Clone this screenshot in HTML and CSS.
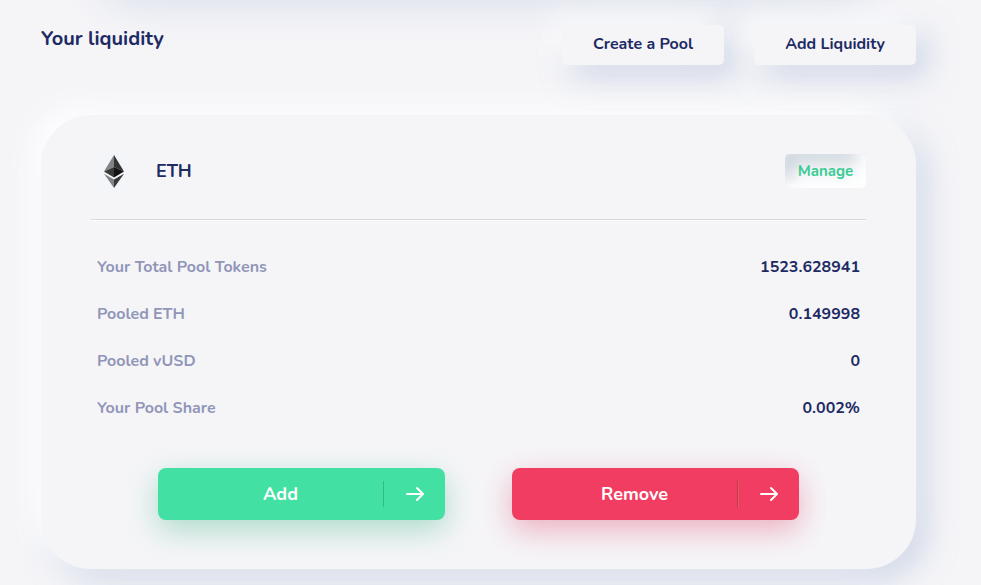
FILE: index.html
```html
<!DOCTYPE html>
<html lang="en">
<head>
<meta charset="utf-8">
<meta name="viewport" content="width=device-width, initial-scale=1">
<title>Your liquidity</title>
<link rel="stylesheet" href="styles.css">
</head>
<body>
<div class="previous-panel"></div>
<main class="page">
  <header class="toolbar">
    <h1 class="title">Your liquidity</h1>
    <div class="toolbar-actions">
      <button class="soft-button" type="button">Create a Pool</button>
      <button class="soft-button" type="button">Add Liquidity</button>
    </div>
  </header>
  <section class="card">
    <div class="card-head">
      <span class="token-icon">
        <svg width="20" height="33" viewBox="0 0 20 33" aria-hidden="true">
          <path d="M10 0 0 16.500 10 12z" fill="#828384"/>
          <path d="M10 0v12l10 4.500z" fill="#343434"/>
          <path d="M0 16.500 10 12v10.500z" fill="#393939"/>
          <path d="M20 16.500 10 12v10.500z" fill="#141414"/>
          <path d="M0 18.700 10 33v-8.500z" fill="#828384"/>
          <path d="M20 18.700 10 33v-8.500z" fill="#393939"/>
        </svg>
      </span>
      <h2 class="token-name">ETH</h2>
      <button class="manage" type="button">Manage</button>
    </div>
    <dl class="stats">
      <div class="stat"><dt>Your Total Pool Tokens</dt><dd>1523.628941</dd></div>
      <div class="stat"><dt>Pooled ETH</dt><dd>0.149998</dd></div>
      <div class="stat"><dt>Pooled vUSD</dt><dd>0</dd></div>
      <div class="stat"><dt>Your Pool Share</dt><dd>0.002%</dd></div>
    </dl>
    <div class="actions">
      <button class="action action-add" type="button">
        <span class="action-label">Add</span>
        <span class="action-arrow"><svg width="20" height="16" viewBox="0 0 20 16" aria-hidden="true"><path d="M2 8h16M12 2l6 6-6 6"/></svg></span>
      </button>
      <button class="action action-remove" type="button">
        <span class="action-label">Remove</span>
        <span class="action-arrow"><svg width="20" height="16" viewBox="0 0 20 16" aria-hidden="true"><path d="M2 8h16M12 2l6 6-6 6"/></svg></span>
      </button>
    </div>
  </section>
</main>
</body>
</html>
```
FILE: styles.css
```css
* {
  box-sizing: border-box;
}

body {
  margin: 0;
  overflow: hidden;
  background: #f5f5f8;
  color: #1d2a63;
  font-family: Nunito, "Open Sans", "Noto Sans", sans-serif;
  font-size: 16px;
  font-weight: 700;
}

button {
  border: 0;
  font: inherit;
  color: inherit;
  cursor: pointer;
}

.previous-panel {
  height: 100px;
  margin: -107px 105px 0 81px;
  border-radius: 50px;
  box-shadow: 10px 10px 40px rgba(174, 188, 216, 0.4);
}

.page {
  padding: 32px 65px 16px 41px;
}

.toolbar {
  display: flex;
  justify-content: space-between;
  align-items: flex-start;
}

.title {
  margin: 0;
  font-size: 20px;
  line-height: 28px;
}

.toolbar-actions {
  display: flex;
  gap: 30px;
}

.soft-button {
  width: 162px;
  height: 40px;
  padding: 0 0 3px;
  border-radius: 5px;
  background: #f5f5f8;
  box-shadow: -10px -10px 30px rgba(255, 255, 255, 0.8), 10px 10px 30px rgba(160, 178, 210, 0.5);
}

.card {
  margin-top: 50px;
  padding: 34px 50px 49px;
  border-radius: 50px;
  background: #f5f5f8;
  box-shadow: -10px -10px 30px #fff, 10px 10px 30px rgba(166, 182, 212, 0.5);
}

.card-head {
  display: flex;
  align-items: center;
  padding-bottom: 26px;
  border-bottom: 1px solid #d6d7e3;
  box-shadow: 0 1px 0 #fff;
}

.token-icon {
  display: grid;
  place-items: center;
  width: 45px;
  height: 44px;
  border-radius: 50%;
  background: #f4f5f9;
}

.token-name {
  flex: 1;
  margin: 0 0 0 20px;
  font-size: 18px;
  line-height: 28px;
}

.manage {
  width: 81px;
  height: 34px;
  padding: 0;
  border-radius: 5px;
  background: #f5f7f8;
  color: #38cb94;
  font-size: 15px;
  box-shadow: inset -8px -8px 16px #fff, inset 8px 8px 16px #ccd5dc;
}

.stats {
  margin: 24px 0 0;
  padding: 0 6px;
}

.stat {
  display: flex;
  justify-content: space-between;
  line-height: 47px;
}

.stat dt {
  color: #9195b8;
}

.stat dd {
  margin: 0;
}

.actions {
  display: grid;
  grid-template-columns: 1fr 1fr;
  gap: 67px;
  margin-top: 36px;
  padding: 0 67px;
}

.action {
  display: flex;
  align-items: center;
  height: 52px;
  padding: 0;
  border-radius: 8px;
  color: #fff;
  font-size: 18px;
}

.action-label {
  flex: 1;
  padding-left: 20px;
}

.action-arrow {
  display: grid;
  place-items: center;
  width: 62px;
  height: 26px;
  border-left: 1px solid;
}

.action-arrow path {
  fill: none;
  stroke: #fff;
  stroke-width: 2;
  stroke-linecap: round;
  stroke-linejoin: round;
}

.action-add {
  background: #42e0a3;
  box-shadow: 0 10px 30px rgba(66, 180, 135, 0.4);
}

.action-add .action-arrow {
  border-color: #2fbd85;
}

.action-remove {
  background: #f03d61;
  box-shadow: 0 10px 30px rgba(225, 70, 105, 0.4);
}

.action-remove .action-arrow {
  border-color: #c23a4c;
  box-shadow: inset 1px 0 0 #e05d5d;
}
```
